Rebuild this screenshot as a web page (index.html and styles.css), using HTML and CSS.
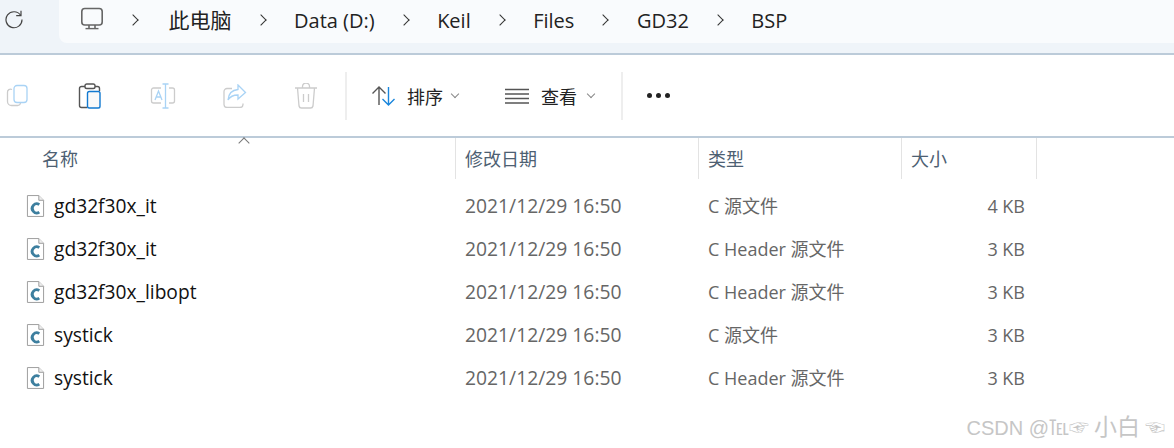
FILE: index.html
```html
<!DOCTYPE html>
<html lang="zh-CN">
<head>
    <meta charset="UTF-8">
    <title>BSP</title>
    <link rel="stylesheet" href="styles.css">
</head>
<body>
    <!-- 地址栏 -->
    <header class="topbar">
        <div class="refresh">
            <svg width="20" height="20" viewBox="0 0 20 20" fill="none" stroke="#444" stroke-width="1.2"><path d="M16.6 6.2A8 8 0 1 0 18 10.5"/><path d="M17 1.8v4.8h-4.8"/></svg>
        </div>
        <nav class="crumbs">
            <svg class="pc-icon" width="24" height="24" viewBox="0 0 24 24" fill="none" stroke="#666" stroke-width="1.6"><rect x="1.8" y="1.5" width="20.4" height="16.5" rx="3"/><path d="M9 18v3M15 18v3"/><path d="M5.5 21.6h13" stroke-width="1.4"/></svg>
            <span class="sep"></span><a class="zh">此电脑</a>
            <span class="sep"></span><a>Data (D:)</a>
            <span class="sep"></span><a>Keil</a>
            <span class="sep"></span><a>Files</a>
            <span class="sep"></span><a>GD32</a>
            <span class="sep"></span><a>BSP</a>
        </nav>
    </header>

    <!-- 工具栏 -->
    <section class="toolbar">
        <div class="tools">
            <svg width="24" height="24" viewBox="0 0 24 24" fill="none" stroke-width="1.3"><path d="M6 5.5a3 3 0 0 0-4.5 3v9a4 4 0 0 0 4 4h6a3 3 0 0 0 3-2.500" stroke="#ccc"/><rect x="8" y="1.500" width="13" height="17" rx="3" stroke="#a9d3f5"/></svg>
            <svg width="26" height="26" viewBox="0 0 26 26" fill="none" stroke-width="1.400"><path d="M8 3.500H4.500a2 2 0 0 0-2 2v17a2 2 0 0 0 2 2H10" stroke="#555"/><path d="M18 3.500h2.500a2 2 0 0 1 2 2V8" stroke="#555"/><rect x="8" y="1" width="10" height="4.500" rx="1.800" stroke="#555"/><rect x="10.500" y="8.500" width="12.500" height="16.500" rx="1.800" stroke="#1279d0" fill="#f9f9f9"/></svg>
            <svg width="26" height="26" viewBox="0 0 26 26" fill="none" stroke-width="1.300"><path d="M11 5H3.500a2 2 0 0 0-2 2v11a2 2 0 0 0 2 2H11M19 5h3.500a2 2 0 0 1 2 2v11a2 2 0 0 1-2 2H19" stroke="#ccc"/><path d="M15.500 1v24M12.500 1h6M12.500 25h6M5 17l3.500-9 3.500 9M6.200 14h4.600" stroke="#a9d3f5"/></svg>
            <svg width="24" height="24" viewBox="0 0 24 24" fill="none" stroke-width="1.300"><path d="M9 4.500H4a3 3 0 0 0-3 3v13a3 3 0 0 0 3 3h13a3 3 0 0 0 3-3v-1" stroke="#ccc"/><path d="M15 1l7.500 7.500L15 15v-4c-5 0-8 1.500-10 5 .5-6 4-10 10-10.500z" stroke="#a9d3f5"/></svg>
            <svg width="24" height="26" viewBox="0 0 24 26" fill="none" stroke="#ccc" stroke-width="1.300"><path d="M1 5h22M8.500 5V3.500a3 3 0 0 1 7 0V5M3.500 5l1.500 18a2.500 2.500 0 0 0 2.500 2h9a2.500 2.500 0 0 0 2.500-2l1.500-18M9.500 11v8M14.500 11v8"/></svg>
        </div>
        <div class="divider"></div>
        <button class="tool-btn sort">
            <svg width="26" height="22" viewBox="0 0 26 22" fill="none" stroke-width="1.400"><path d="M8 20V2M1.500 8.500L8 2l6.500 6.500" stroke="#555"/><path d="M17.500 2v18M11.500 14l6 6 6-6" stroke="#1a86dc"/></svg>
            <span>排序</span><i class="caret"></i>
        </button>
        <button class="tool-btn view">
            <svg width="24" height="16" viewBox="0 0 24 16" fill="none" stroke="#555" stroke-width="1.300"><path d="M0 1.500h24M0 6h24M0 10.500h24M0 15h24"/></svg>
            <span>查看</span><i class="caret"></i>
        </button>
        <div class="divider"></div>
        <div class="more"><b></b><b></b><b></b></div>
    </section>

    <!-- 文件列表 -->
    <main class="files">
        <div class="sort-mark"></div>
        <div class="row head">
            <div class="name">名称</div>
            <div>修改日期</div>
            <div>类型</div>
            <div>大小</div>
            <div></div>
        </div>
        <div class="row">
            <div class="name"><svg class="c-icon" viewBox="0 0 20 24"><use href="#cfile"/></svg>gd32f30x_it</div>
            <div class="date">2021/12/29 16:50</div><div class="type">C 源文件</div><div class="size">4 KB</div>
        </div>
        <div class="row">
            <div class="name"><svg class="c-icon" viewBox="0 0 20 24"><use href="#cfile"/></svg>gd32f30x_it</div>
            <div class="date">2021/12/29 16:50</div><div class="type">C Header 源文件</div><div class="size">3 KB</div>
        </div>
        <div class="row">
            <div class="name"><svg class="c-icon" viewBox="0 0 20 24"><use href="#cfile"/></svg>gd32f30x_libopt</div>
            <div class="date">2021/12/29 16:50</div><div class="type">C Header 源文件</div><div class="size">3 KB</div>
        </div>
        <div class="row">
            <div class="name"><svg class="c-icon" viewBox="0 0 20 24"><use href="#cfile"/></svg>systick</div>
            <div class="date">2021/12/29 16:50</div><div class="type">C 源文件</div><div class="size">3 KB</div>
        </div>
        <div class="row">
            <div class="name"><svg class="c-icon" viewBox="0 0 20 24"><use href="#cfile"/></svg>systick</div>
            <div class="date">2021/12/29 16:50</div><div class="type">C Header 源文件</div><div class="size">3 KB</div>
        </div>
    </main>

    <div class="watermark">CSDN @℡☞<span class="wm-name">小白</span>☜</div>

    <svg width="0" height="0" class="defs">
        <symbol id="cfile" viewBox="0 0 20 24">
            <path d="M1.500 1h12l5 5v17h-17z" fill="#fff" stroke="#9a9a9a"/>
            <path d="M13.500 1v5h5" fill="#eee" stroke="#9a9a9a"/>
            <path d="M14 10.500a4.800 4.800 0 1 0 0 8" fill="none" stroke="#3d7f9f" stroke-width="3"/>
        </symbol>
    </svg>
</body>
</html>
```

FILE: styles.css
```css
/* 全局 */
html, body {
    margin: 0;
    padding: 0;
    height: 448px;
    overflow: hidden;
    background: #fff;
    color: #1a1a1a;
    font-family: "Open Sans", "Noto Sans CJK SC", sans-serif;
    font-size: 18px;
}

body {
    position: relative;
}

.defs {
    position: absolute;
}

/* 地址栏 */
.topbar {
    display: flex;
    height: 53px;
    background: #eff4f9;
    border-bottom: 2px solid #bccbd9;
}

.refresh {
    width: 59px;
    padding: 9px 0 0 4px;
    box-sizing: border-box;
}

.crumbs {
    flex: 1;
    height: 43px;
    display: flex;
    align-items: center;
    padding-left: 21px;
    background: #f9fbfd;
    border-bottom-left-radius: 8px;
    font-size: 20px;
}

.crumbs .pc-icon {
    margin-top: -6px;
}

.crumbs a {
    color: #222;
    margin-top: -3px;
}

.crumbs .zh {
    font-size: 21px;
    margin: -6px 0 0 2px;
}

.sep {
    width: 7px;
    height: 7px;
    margin: -3px 29.5px 0 25px;
    border-top: 1.6px solid #333;
    border-right: 1.6px solid #333;
    transform: rotate(45deg);
}

/* 工具栏 */
.toolbar {
    display: flex;
    align-items: center;
    height: 81px;
    border-bottom: 2px solid #bccbd9;
}

.tools {
    display: flex;
    align-items: center;
    gap: 47px;
    width: 345px;
    padding-left: 6px;
    box-sizing: border-box;
}

.divider {
    width: 2px;
    height: 48px;
    background: #eeeeee;
}

.tool-btn {
    display: flex;
    align-items: center;
    border: none;
    background: none;
    padding: 0;
    font: inherit;
    color: #222;
}

.sort {
    width: 158px;
    padding-left: 24px;
    gap: 10px;
}

.view {
    width: 116px;
    gap: 12px;
}

.caret {
    width: 5px;
    height: 5px;
    margin: -4px 0 0 -1px;
    border-right: 1px solid #888;
    border-bottom: 1px solid #888;
    transform: rotate(45deg);
}

.more {
    display: flex;
    gap: 4px;
    margin-left: 24px;
}

.more b {
    width: 5px;
    height: 5px;
    border-radius: 50%;
    background: #222;
}

/* 文件列表 */
.files {
    position: relative;
}

.sort-mark {
    position: absolute;
    left: 240px;
    top: 1px;
    width: 7px;
    height: 7px;
    border-left: 1px solid #777;
    border-top: 1px solid #777;
    transform: rotate(45deg);
}

.row {
    display: grid;
    grid-template-columns: 455px 243px 203px 135px 1fr;
    align-items: center;
    height: 43px;
    color: #666;
}

.row > div {
    padding-left: 10px;
    white-space: nowrap;
}

.row > .name {
    display: flex;
    align-items: center;
    padding-left: 26px;
    color: #111;
    font-size: 19.2px;
}

.row > .date {
    font-size: 19.3px;
}

.row > .type {
    margin-top: -1px;
}

.row > .size {
    text-align: right;
    padding-right: 11px;
}

.c-icon {
    width: 19px;
    height: 24px;
    margin-right: 9px;
}

.head {
    height: 41px;
    margin-bottom: 5px;
    align-items: stretch;
    color: #4d6072;
}

.head > div {
    display: flex;
    align-items: center;
    padding-left: 9px;
    border-left: 1px solid #e3e3e3;
    padding-bottom: 2px;
}

.head > .name {
    border-left: none;
    padding-left: 42px;
    color: #4d6072;
    font-size: 18px;
}

/* 水印 */
.watermark {
    position: absolute;
    right: 9px;
    bottom: 6px;
    color: #c6c6c6;
    font-family: "Liberation Sans", "Noto Sans CJK SC", "DejaVu Sans", sans-serif;
    font-size: 20px;
    white-space: nowrap;
}

.wm-name {
    font-size: 23px;
    margin: 0 5px;
}
```
